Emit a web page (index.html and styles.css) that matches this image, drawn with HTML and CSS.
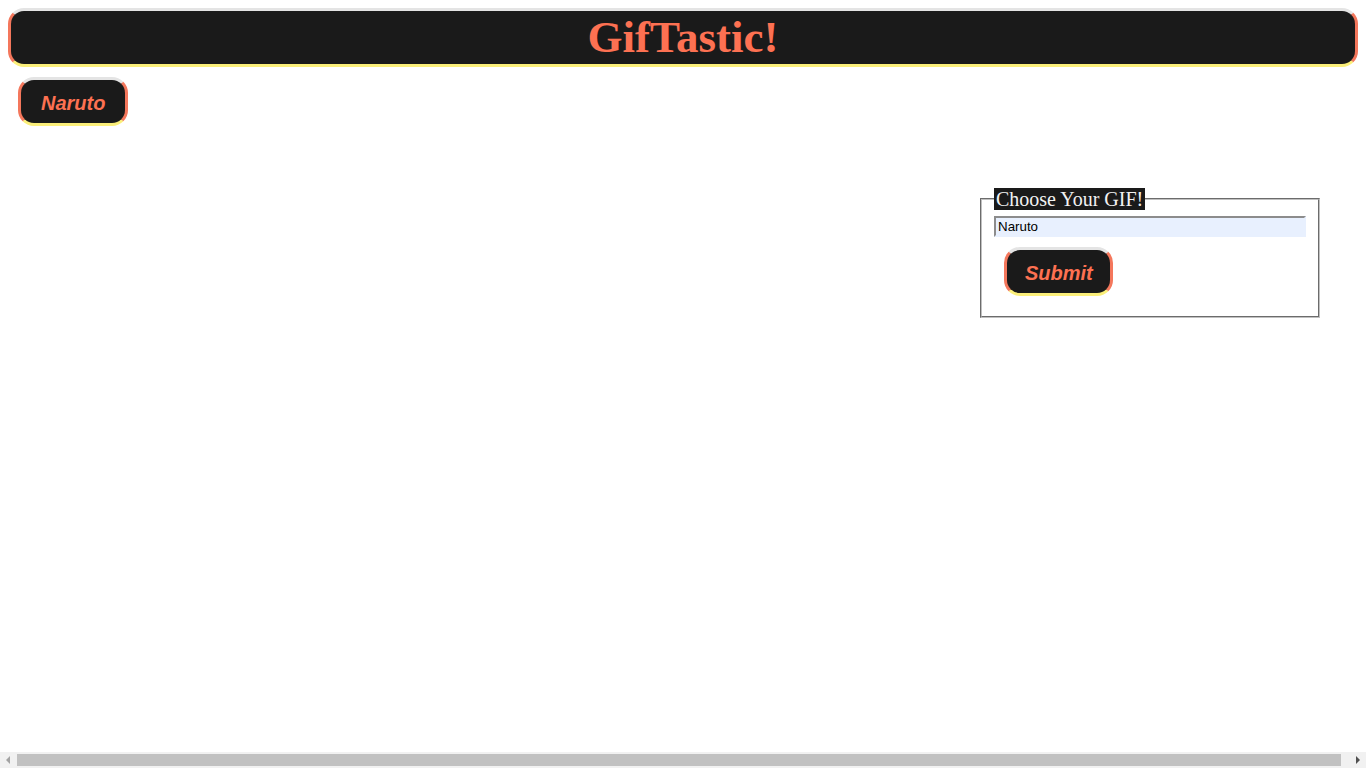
FILE: index.html
```html
<!DOCTYPE html>
<html lang="en">
<head>
<meta charset="utf-8">
<title>GifTastic!</title>
<link rel="stylesheet" href="styles.css">
</head>
<body>
  <header class="banner">
    <h1 class="banner-title">GifTastic!</h1>
  </header>
  <div class="topic-buttons">
    <button class="pill-btn" type="button">Naruto</button>
  </div>
  <div class="main-row">
    <section class="gif-area"></section>
    <aside class="search-col">
      <form class="search-form">
        <fieldset class="search-fieldset">
          <legend class="search-legend">Choose Your GIF!</legend>
          <input class="search-input" type="text" value="Naruto">
          <button class="pill-btn pill-btn--submit" type="button">Submit</button>
        </fieldset>
      </form>
    </aside>
  </div>
  <div class="hscroll" aria-hidden="true">
    <span class="hscroll-arrow hscroll-left"></span>
    <span class="hscroll-track"><span class="hscroll-thumb"></span></span>
    <span class="hscroll-arrow hscroll-right"></span>
  </div>
</body>
</html>
```

FILE: styles.css
```css
html, body {
  background: #ffffff;
}

body {
  margin: 8px;
  font-family: "Liberation Serif", "Times New Roman", serif;
}

.banner {
  background: #1a1a1a;
  border-style: solid;
  border-width: 3px;
  border-color: #e4e4e4 #f4775c #fbef7a #f4775c;
  border-radius: 16px;
  text-align: center;
}

.banner-title {
  margin: 0;
  font-family: "Liberation Serif", "Times New Roman", serif;
  font-weight: bold;
  font-size: 45px;
  line-height: 53px;
  color: #fd7152;
}

.topic-buttons {
  display: flex;
  flex-wrap: wrap;
}

.pill-btn {
  margin: 10px;
  padding: 12px 20px 8px;
  background: #1a1a1a;
  border-style: solid;
  border-width: 3px;
  border-color: #e4e4e4 #f4775c #fbef7a #f4775c;
  border-radius: 16px;
  font-family: "Liberation Sans", Arial, sans-serif;
  font-weight: bold;
  font-style: italic;
  font-size: 20px;
  line-height: 23px;
  color: #fd7152;
  cursor: pointer;
}

.pill-btn--submit {
  padding-left: 18px;
  padding-right: 17px;
}

.main-row {
  display: flex;
}

.gif-area {
  flex: 1;
}

.search-col {
  width: 344px;
  margin-right: 36px;
  padding-top: 52px;
}

.search-form {
  margin: 0;
}

.search-fieldset {
  margin: 0 2px;
  padding: 5.6px 12px 10px;
  border: 2px groove #c0c0c0;
}

.search-legend {
  padding: 0 2px;
  background: #1a1a1a;
  color: #f2f2f2;
  font-family: "Liberation Serif", "Times New Roman", serif;
  font-size: 20px;
  line-height: 22px;
}

.search-input {
  display: block;
  box-sizing: border-box;
  width: 100%;
  height: 21px;
  margin: 0;
  padding: 1px 2px;
  background: #e8f0fe;
  border-style: solid;
  border-width: 2px;
  border-color: #8c8c8c #e8f0fe #e8f0fe #8c8c8c;
  font-family: "Liberation Sans", Arial, sans-serif;
  font-size: 13.33px;
  color: #000;
}

.search-fieldset .pill-btn {
  display: block;
}

/* horizontal page scrollbar shown along the bottom of the window */
.hscroll {
  position: fixed;
  left: 0;
  right: 0;
  bottom: 0;
  height: 16px;
  display: flex;
  align-items: center;
  background: #f1f1f1;
}

.hscroll-arrow {
  width: 16px;
  height: 16px;
  display: flex;
  align-items: center;
  justify-content: center;
}

.hscroll-arrow::before {
  content: "";
  width: 0;
  height: 0;
  border-top: 4px solid transparent;
  border-bottom: 4px solid transparent;
}

.hscroll-left::before {
  border-right: 4px solid #a3a3a3;
}

.hscroll-right::before {
  border-left: 4px solid #505050;
}

.hscroll-track {
  flex: 1;
  height: 16px;
  display: flex;
  align-items: center;
  padding: 0 9px 0 1px;
}

.hscroll-thumb {
  flex: 1;
  height: 12px;
  background: #c1c1c1;
}
```
